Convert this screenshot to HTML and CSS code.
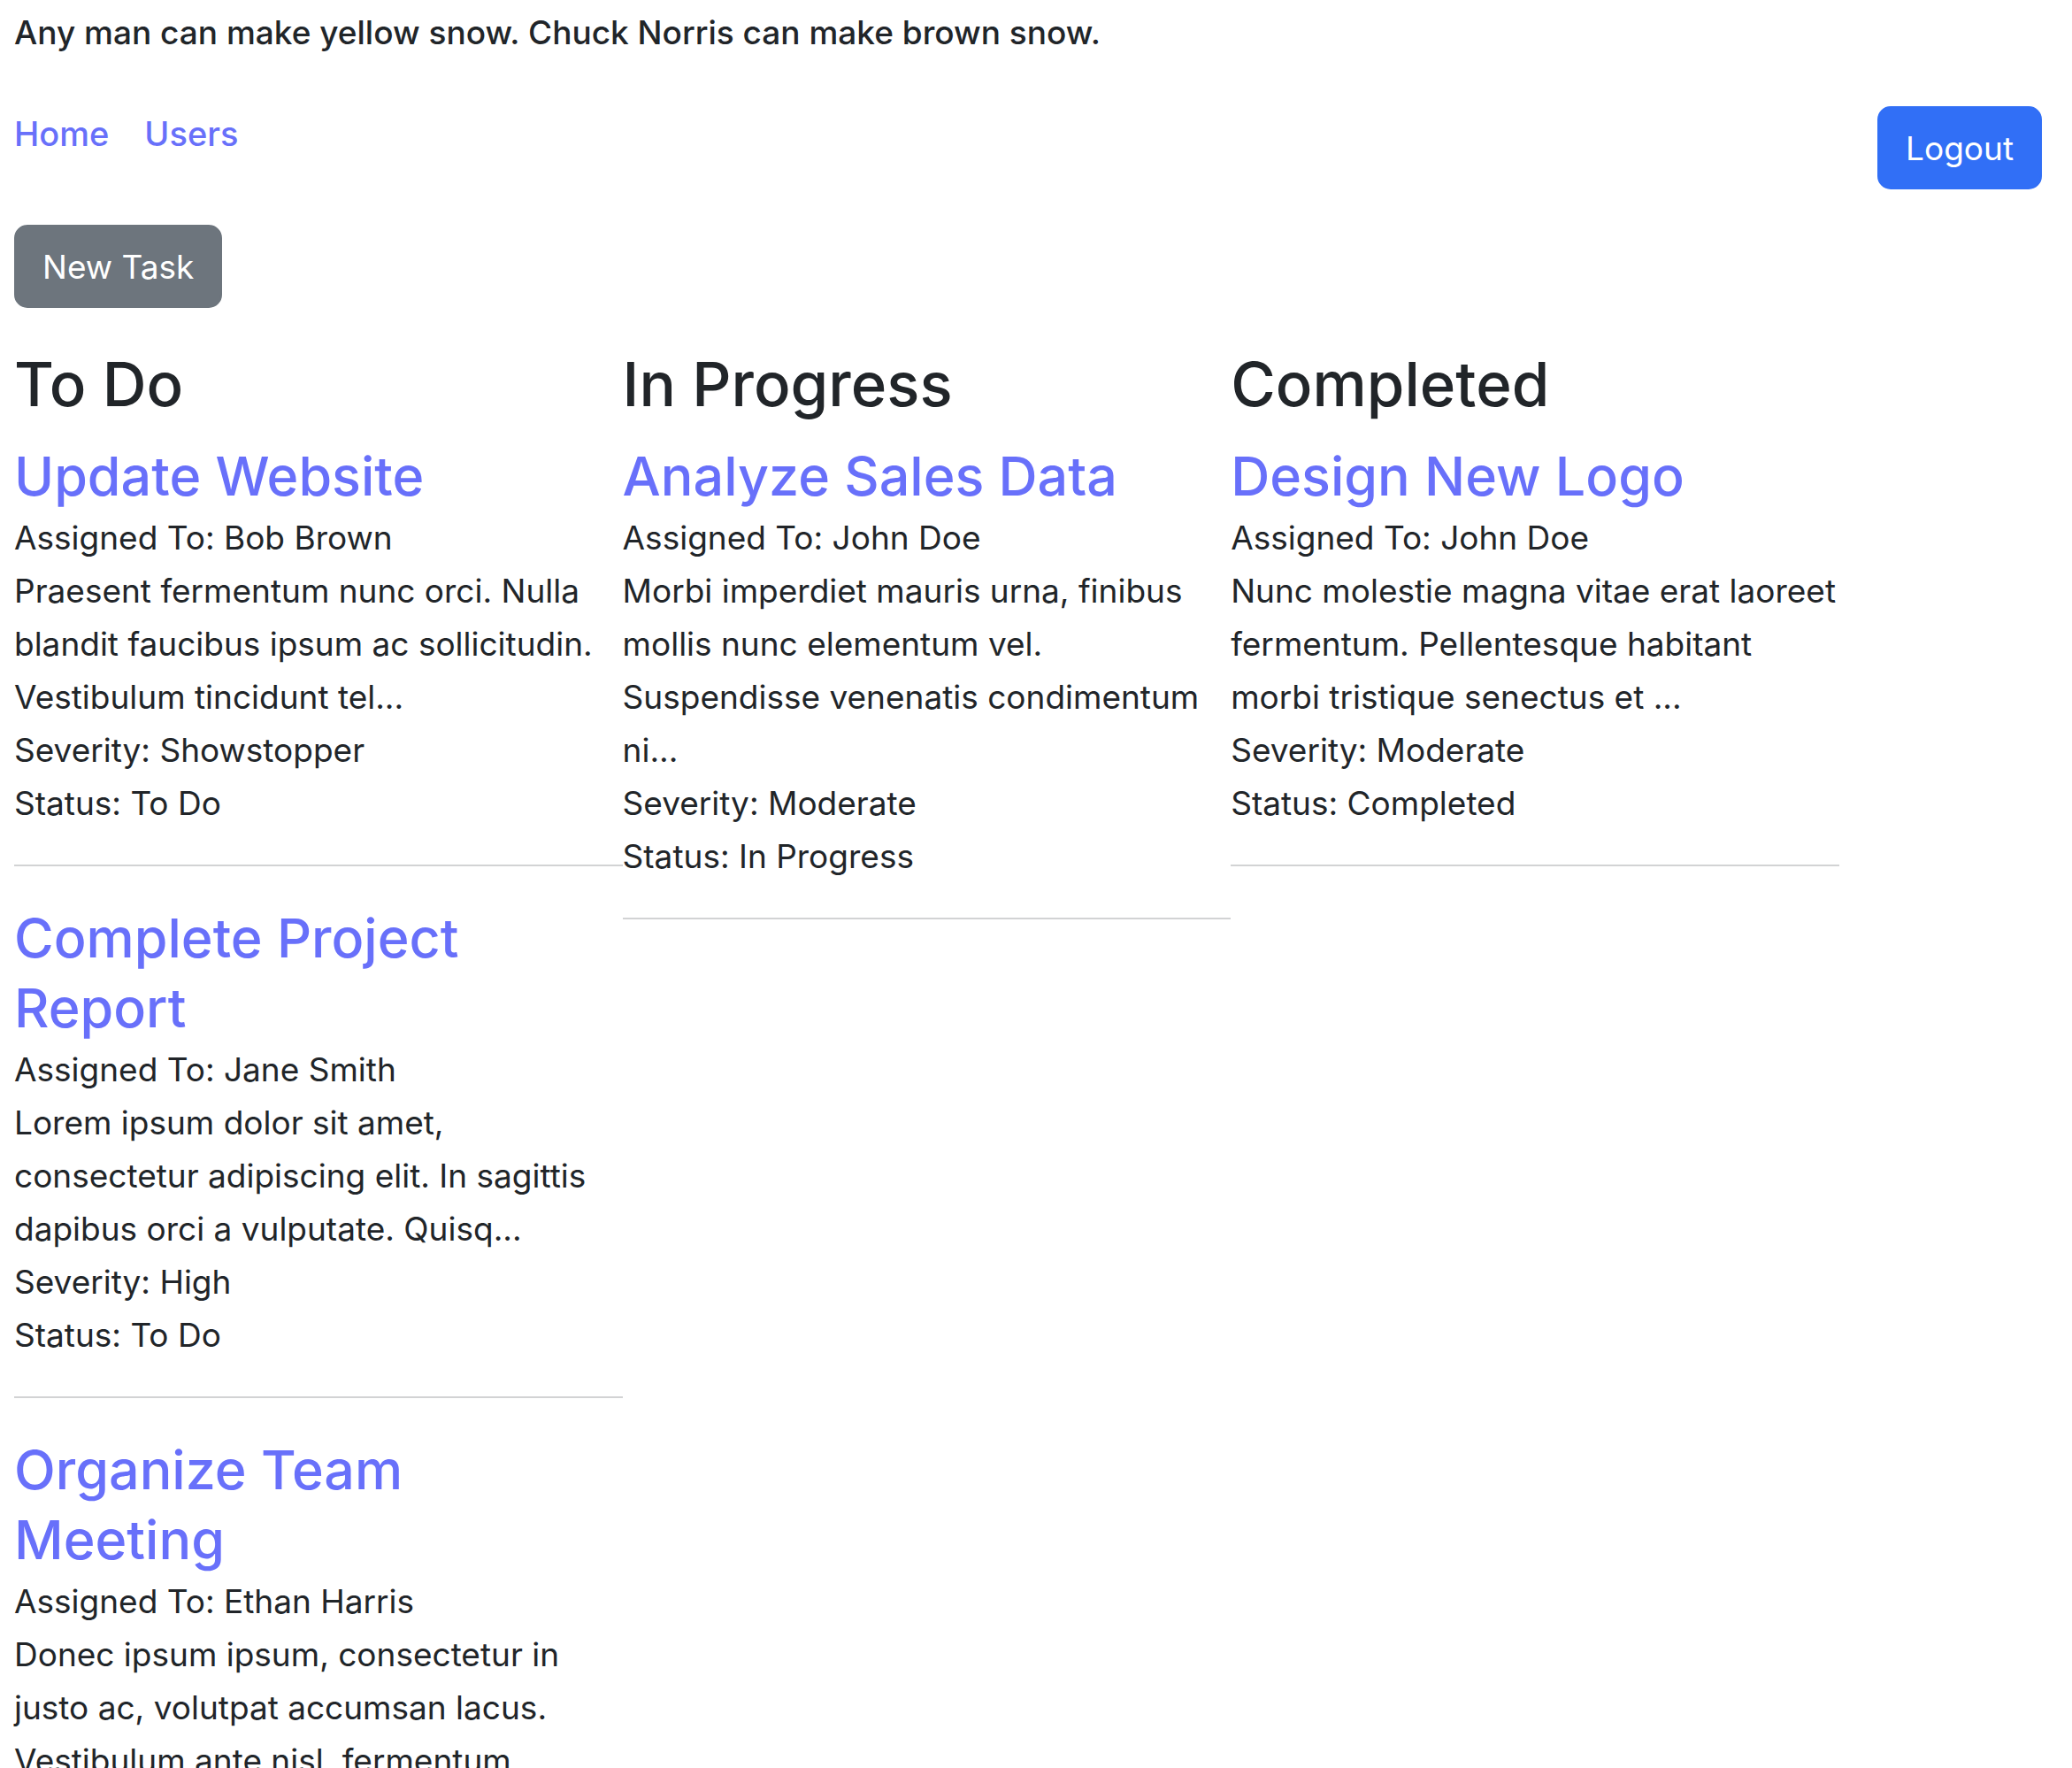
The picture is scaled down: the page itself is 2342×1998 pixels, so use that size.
FILE: index.html
```html
<!DOCTYPE html>
<html lang="en">
<head>
  <meta charset="utf-8">
  <meta name="viewport" content="width=device-width, initial-scale=1">
  <title>Tasks</title>
  <link rel="stylesheet" href="styles.css">
</head>
<body>
  <div class="app">
    <p class="joke">Any man can make yellow snow. Chuck Norris can make brown snow.</p>
    <header class="topbar">
      <nav class="nav">
        <a class="link" href="#home">Home</a>
        <a class="link" href="#users">Users</a>
      </nav>
      <button class="btn btn-primary" type="button">Logout</button>
    </header>
    <main>
      <button class="btn btn-secondary" type="button">New Task</button>
      <div class="board">
        <section class="column">
          <h1 class="column-title">To Do</h1>
          <article class="task">
            <h2 class="task-title"><a class="link" href="#update-website">Update Website</a></h2>
            <p>Assigned To: Bob Brown</p>
            <p>Praesent fermentum nunc orci. Nulla blandit faucibus ipsum ac sollicitudin. Vestibulum tincidunt tel...</p>
            <p>Severity: Showstopper</p>
            <p>Status: To Do</p>
          </article>
          <hr class="rule">
          <article class="task">
            <h2 class="task-title"><a class="link" href="#project-report">Complete Project Report</a></h2>
            <p>Assigned To: Jane Smith</p>
            <p>Lorem ipsum dolor sit amet, consectetur adipiscing elit. In sagittis dapibus orci a vulputate. Quisq...</p>
            <p>Severity: High</p>
            <p>Status: To Do</p>
          </article>
          <hr class="rule">
          <article class="task">
            <h2 class="task-title"><a class="link" href="#team-meeting">Organize Team Meeting</a></h2>
            <p>Assigned To: Ethan Harris</p>
            <p>Donec ipsum ipsum, consectetur in justo ac, volutpat accumsan lacus. Vestibulum ante nisl, fermentum</p>
          </article>
        </section>
        <section class="column">
          <h1 class="column-title">In Progress</h1>
          <article class="task">
            <h2 class="task-title"><a class="link" href="#sales-data">Analyze Sales Data</a></h2>
            <p>Assigned To: John Doe</p>
            <p>Morbi imperdiet mauris urna, finibus mollis nunc elementum vel. Suspendisse venenatis condimentum ni...</p>
            <p>Severity: Moderate</p>
            <p>Status: In Progress</p>
          </article>
          <hr class="rule">
        </section>
        <section class="column">
          <h1 class="column-title">Completed</h1>
          <article class="task">
            <h2 class="task-title"><a class="link" href="#new-logo">Design New Logo</a></h2>
            <p>Assigned To: John Doe</p>
            <p>Nunc molestie magna vitae erat laoreet fermentum. Pellentesque habitant morbi tristique senectus et ...</p>
            <p>Severity: Moderate</p>
            <p>Status: Completed</p>
          </article>
          <hr class="rule">
        </section>
      </div>
    </main>
  </div>
</body>
</html>
```
FILE: styles.css
```css
* {
  box-sizing: border-box;
}

body {
  margin: 0;
  background: #fff;
  color: #212529;
  font-family: Inter, "Liberation Sans", sans-serif;
  font-size: 37px;
  line-height: 60px;
}

.app {
  height: 100vh;
  overflow: hidden;
  padding: 13px 34px 0 16px;
}

p {
  margin: 0;
}

.joke {
  margin-bottom: 59px;
  font-weight: 500;
  line-height: 48px;
}

.topbar {
  display: flex;
  justify-content: space-between;
  align-items: flex-start;
  margin-bottom: 40px;
}

.nav {
  display: flex;
  gap: 40px;
  font-size: 38px;
  line-height: 62px;
}

.link {
  color: #6870fa;
  font-weight: 500;
  text-decoration: none;
}

.btn {
  display: block;
  padding: 16px 30px 14px;
  border: 2px solid transparent;
  border-radius: 15px;
  color: #fff;
  font: inherit;
}

.btn-primary {
  background-color: #316ff6;
  border-color: #316ff6;
}

.btn-secondary {
  background-color: #6d757d;
  border-color: #6d757d;
}

.board {
  display: flex;
  align-items: flex-start;
  margin-top: 41px;
}

.column {
  flex: 0 0 30%;
}

.column-title {
  margin: 0 0 20px;
  font-size: 69px;
  font-weight: 500;
  line-height: 90px;
}

.task-title {
  margin: 0;
  font-size: 61px;
  font-weight: 500;
  line-height: 79px;
}

.rule {
  height: 2px;
  margin: 39px 0 42px;
  border: 0;
  background: #d2d3d4;
}
```
